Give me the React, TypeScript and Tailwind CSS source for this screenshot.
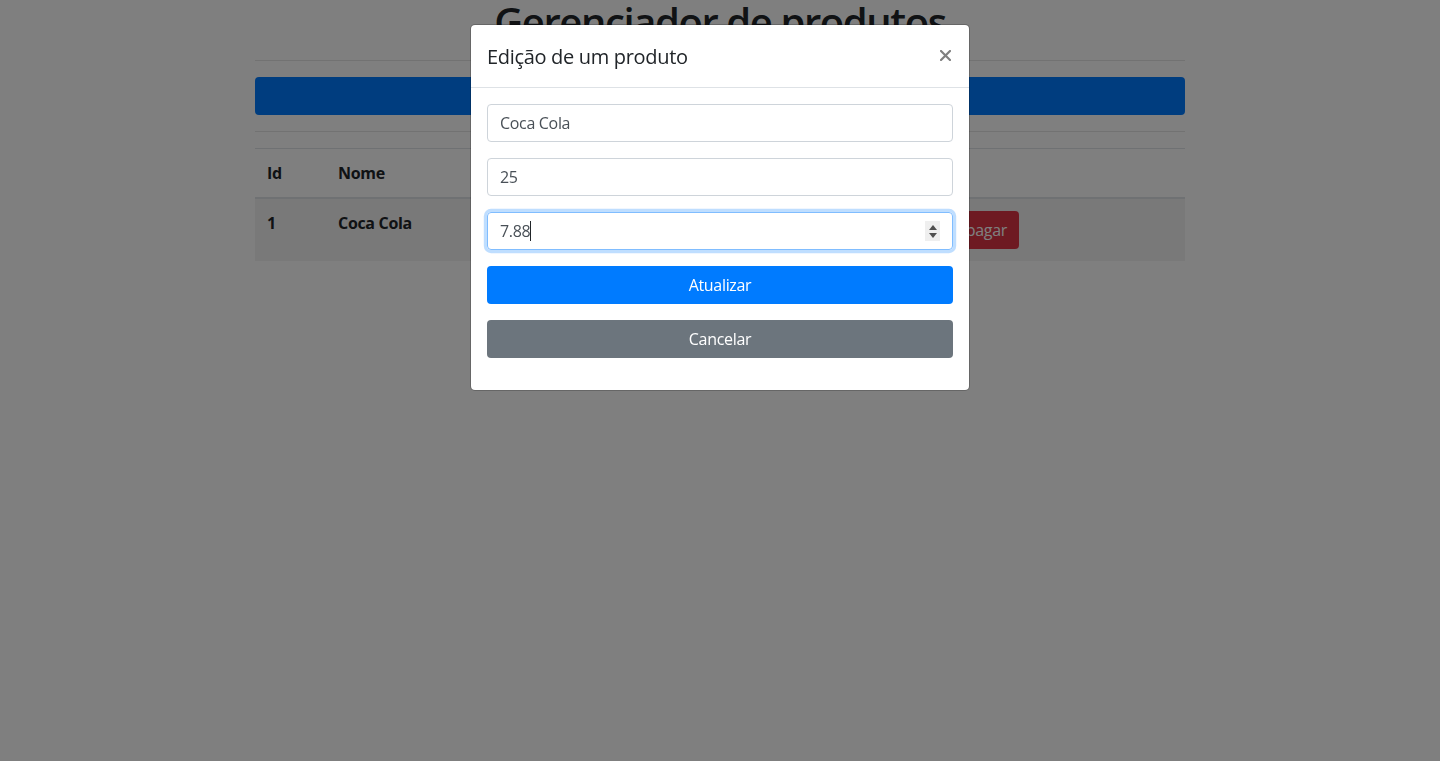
export default function App() {
  return (
    <div className="relative min-h-[761px] bg-white text-[#212529] font-['Open_Sans',sans-serif] tracking-[-0.02em] text-[16px] leading-[1.5]">
      {/* Page */}
      <div className="w-[960px] mx-auto px-[15px]">
        <h1 className="mt-[-2px] h-[48px] text-[40px] leading-[1.2] font-semibold tracking-[-0.035em] text-center">
          Gerenciador de produtos
        </h1>
        <hr className="mt-[14px] mb-[16px] border-0 border-t border-black/10" />
        <button className="w-full h-[38px] rounded bg-[#007bff] text-white text-[16px]">
          Novo produto
        </button>
        <hr className="mt-[16px] mb-[16px] border-0 border-t border-black/10" />
        <table className="w-full table-fixed border-collapse">
          <colgroup>
            <col className="w-[71px]" />
            <col className="w-[200px]" />
            <col className="w-[200px]" />
            <col className="w-[138px]" />
            <col />
          </colgroup>
          <thead>
            <tr>
              <th className="text-left font-bold px-3 py-3 border-t border-b-2 border-[#dee2e6]">Id</th>
              <th className="text-left font-bold px-3 py-3 border-t border-b-2 border-[#dee2e6]">Nome</th>
              <th className="text-left font-bold px-3 py-3 border-t border-b-2 border-[#dee2e6]">Quantidade</th>
              <th className="text-left font-bold px-3 py-3 border-t border-b-2 border-[#dee2e6]">Preço</th>
              <th className="text-left font-bold px-3 py-3 border-t border-b-2 border-[#dee2e6]">Ações</th>
            </tr>
          </thead>
          <tbody>
            <tr className="bg-black/5">
              <td className="align-top px-3 py-3 font-bold border-t border-[#dee2e6]">1</td>
              <td className="align-top px-3 py-3 font-bold border-t border-[#dee2e6]">Coca Cola</td>
              <td className="align-top px-3 py-3 border-t border-[#dee2e6]">25</td>
              <td className="align-top px-3 py-3 border-t border-[#dee2e6]">7.88</td>
              <td className="align-top px-3 py-3 border-t border-[#dee2e6]">
                <div className="flex gap-[4px]">
                  <button className="w-[64px] h-[38px] rounded bg-[#ffc107] text-[#212529]">Editar</button>
                  <button className="w-[75px] h-[38px] rounded bg-[#dc3545] text-white">Apagar</button>
                </div>
              </td>
            </tr>
          </tbody>
        </table>
      </div>

      {/* Backdrop */}
      <div className="fixed inset-0 bg-black/50" />

      {/* Modal */}
      <div className="fixed inset-0 flex justify-center items-start">
        <div className="mt-[24px] w-[500px] bg-white rounded-[5px] border border-black/20 bg-clip-padding">
          <div className="flex items-center justify-between px-4 pt-[17px] pb-[15px] border-b border-[#dee2e6]">
            <h5 className="text-[20px] leading-[1.5] font-medium">Edição de um produto</h5>
            <svg width="11" height="11" viewBox="0 0 11 11" className="mr-[2px] mb-[3px]">
              <path d="M1 1 L10 10 M10 1 L1 10" stroke="#808080" strokeWidth="2.2" strokeLinecap="square" />
            </svg>
          </div>
          <div className="p-4 flex flex-col gap-4">
            <div className="h-[38px] border border-[#ced4da] rounded px-3 flex items-center text-[#495057]">
              Coca Cola
            </div>
            <div className="h-[38px] border border-[#ced4da] rounded px-3 flex items-center text-[#495057]">
              25
            </div>
            <div className="relative h-[38px] border border-[#80bdff] rounded px-3 flex items-center text-[#495057] shadow-[0_0_0_3.2px_rgba(0,123,255,0.25)]">
              <span>7.88</span>
              <span className="inline-block w-px h-[20px] bg-[#212529]" />
              <div className="absolute right-[12px] top-[8px] w-[15px] h-[20px] bg-[#efefef] flex flex-col items-center justify-center gap-[3px]">
                <svg width="8" height="5" viewBox="0 0 8 5">
                  <path d="M0 5 L4 0 L8 5 Z" fill="#505050" />
                </svg>
                <svg width="8" height="5" viewBox="0 0 8 5">
                  <path d="M0 0 L8 0 L4 5 Z" fill="#505050" />
                </svg>
              </div>
            </div>
            <button className="h-[38px] w-full rounded bg-[#007bff] text-white">Atualizar</button>
            <button className="h-[38px] w-full rounded bg-[#6c757d] text-white mb-4">Cancelar</button>
          </div>
        </div>
      </div>
    </div>
  );
}
